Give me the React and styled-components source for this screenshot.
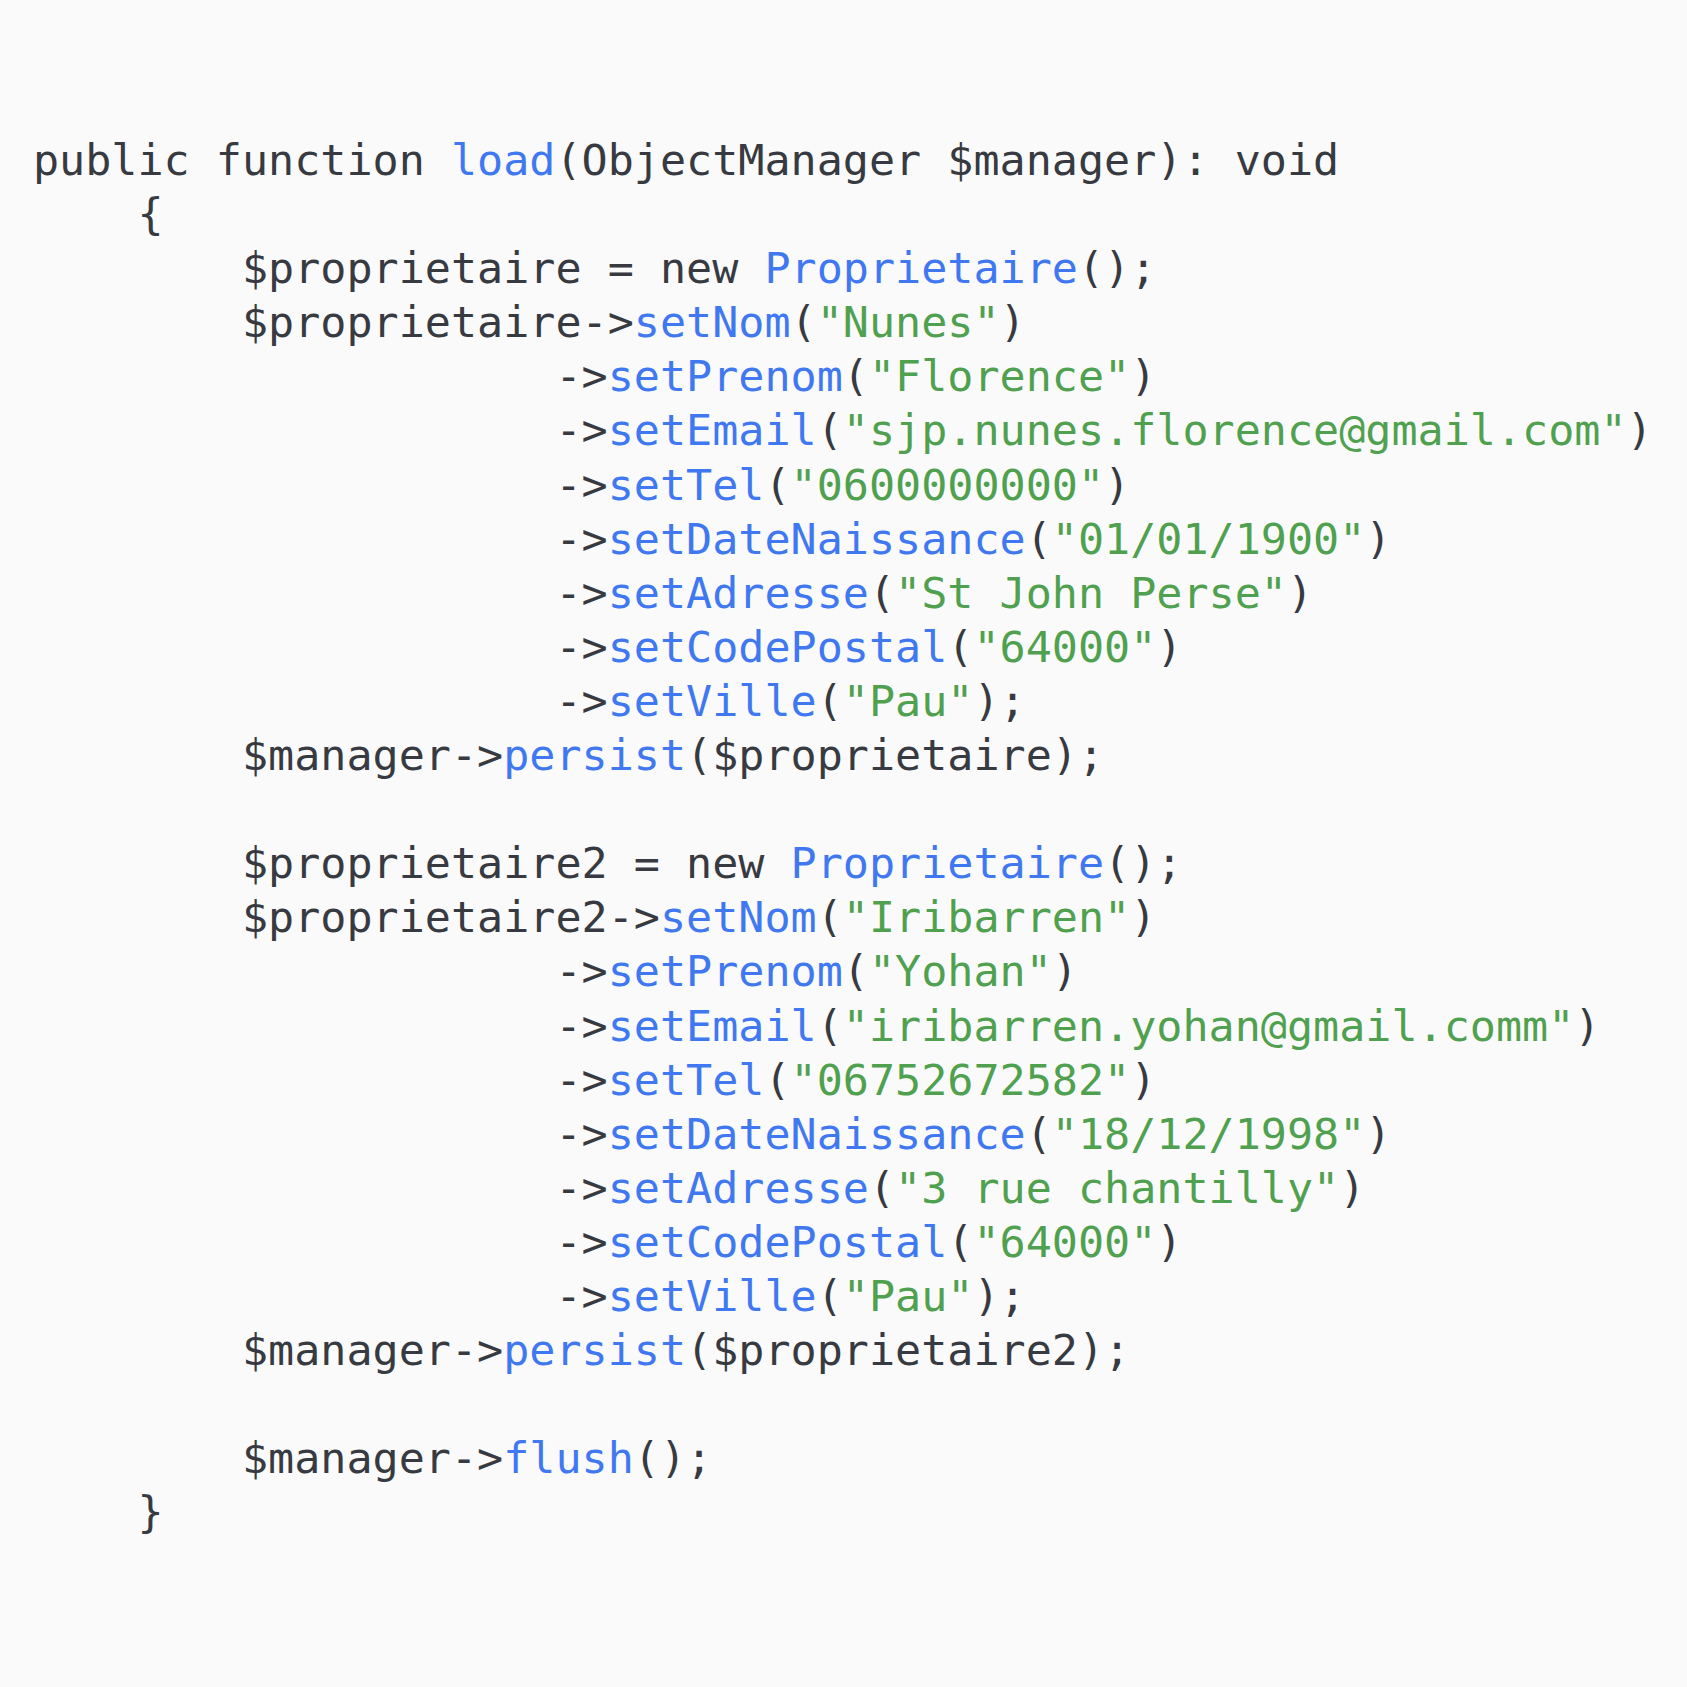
import React from "react";
import styled, { createGlobalStyle } from "styled-components";

const GlobalStyle = createGlobalStyle`
  html, body {
    margin: 0;
    padding: 0;
    background: #fafafa;
  }
`;

const colors = {
  plain: "#383a42",
  fn: "#4078f2",
  str: "#50a14f",
};

// each line: [indent, [[kind, text], ...]]
const lines = [
  [0, [["plain", "public function "], ["fn", "load"], ["plain", "(ObjectManager $manager): void"]]],
  [4, [["plain", "{"]]],
  [8, [["plain", "$proprietaire = new "], ["fn", "Proprietaire"], ["plain", "();"]]],
  [8, [["plain", "$proprietaire->"], ["fn", "setNom"], ["plain", "("], ["str", "\"Nunes\""], ["plain", ")"]]],
  [20, [["plain", "->"], ["fn", "setPrenom"], ["plain", "("], ["str", "\"Florence\""], ["plain", ")"]]],
  [20, [["plain", "->"], ["fn", "setEmail"], ["plain", "("], ["str", "\"sjp.nunes.florence@gmail.com\""], ["plain", ")"]]],
  [20, [["plain", "->"], ["fn", "setTel"], ["plain", "("], ["str", "\"0600000000\""], ["plain", ")"]]],
  [20, [["plain", "->"], ["fn", "setDateNaissance"], ["plain", "("], ["str", "\"01/01/1900\""], ["plain", ")"]]],
  [20, [["plain", "->"], ["fn", "setAdresse"], ["plain", "("], ["str", "\"St John Perse\""], ["plain", ")"]]],
  [20, [["plain", "->"], ["fn", "setCodePostal"], ["plain", "("], ["str", "\"64000\""], ["plain", ")"]]],
  [20, [["plain", "->"], ["fn", "setVille"], ["plain", "("], ["str", "\"Pau\""], ["plain", ");"]]],
  [8, [["plain", "$manager->"], ["fn", "persist"], ["plain", "($proprietaire);"]]],
  [0, []],
  [8, [["plain", "$proprietaire2 = new "], ["fn", "Proprietaire"], ["plain", "();"]]],
  [8, [["plain", "$proprietaire2->"], ["fn", "setNom"], ["plain", "("], ["str", "\"Iribarren\""], ["plain", ")"]]],
  [20, [["plain", "->"], ["fn", "setPrenom"], ["plain", "("], ["str", "\"Yohan\""], ["plain", ")"]]],
  [20, [["plain", "->"], ["fn", "setEmail"], ["plain", "("], ["str", "\"iribarren.yohan@gmail.comm\""], ["plain", ")"]]],
  [20, [["plain", "->"], ["fn", "setTel"], ["plain", "("], ["str", "\"06752672582\""], ["plain", ")"]]],
  [20, [["plain", "->"], ["fn", "setDateNaissance"], ["plain", "("], ["str", "\"18/12/1998\""], ["plain", ")"]]],
  [20, [["plain", "->"], ["fn", "setAdresse"], ["plain", "("], ["str", "\"3 rue chantilly\""], ["plain", ")"]]],
  [20, [["plain", "->"], ["fn", "setCodePostal"], ["plain", "("], ["str", "\"64000\""], ["plain", ")"]]],
  [20, [["plain", "->"], ["fn", "setVille"], ["plain", "("], ["str", "\"Pau\""], ["plain", ");"]]],
  [8, [["plain", "$manager->"], ["fn", "persist"], ["plain", "($proprietaire2);"]]],
  [0, []],
  [8, [["plain", "$manager->"], ["fn", "flush"], ["plain", "();"]]],
  [4, [["plain", "}"]]],
];

export default function App() {
  return (
    <>
      <GlobalStyle />
      <Page>
        <CodeBlock>
          {lines.map(([indent, tokens], i) => (
            <Line key={i}>
              {" ".repeat(indent)}
              {tokens.map(([kind, text], j) => (
                <Token key={j} kind={kind}>
                  {text}
                </Token>
              ))}
            </Line>
          ))}
        </CodeBlock>
      </Page>
    </>
  );
}

const Page = styled.div`
  width: 1687px;
  height: 1687px;
  background: #fafafa;
  box-sizing: border-box;
  padding: 133px 0 0 33px;
  overflow: hidden;
`;

const CodeBlock = styled.pre`
  margin: 0;
  font-family: "DejaVu Sans Mono", "Liberation Mono", monospace;
  font-size: 43.4px;
  line-height: 54.1px;
  color: #383a42;
  display: flex;
  flex-direction: column;
`;

const Line = styled.div`
  white-space: pre;
  min-height: 54.1px;
`;

const Token = styled.span`
  color: ${(p) => colors[p.kind]};
`;
